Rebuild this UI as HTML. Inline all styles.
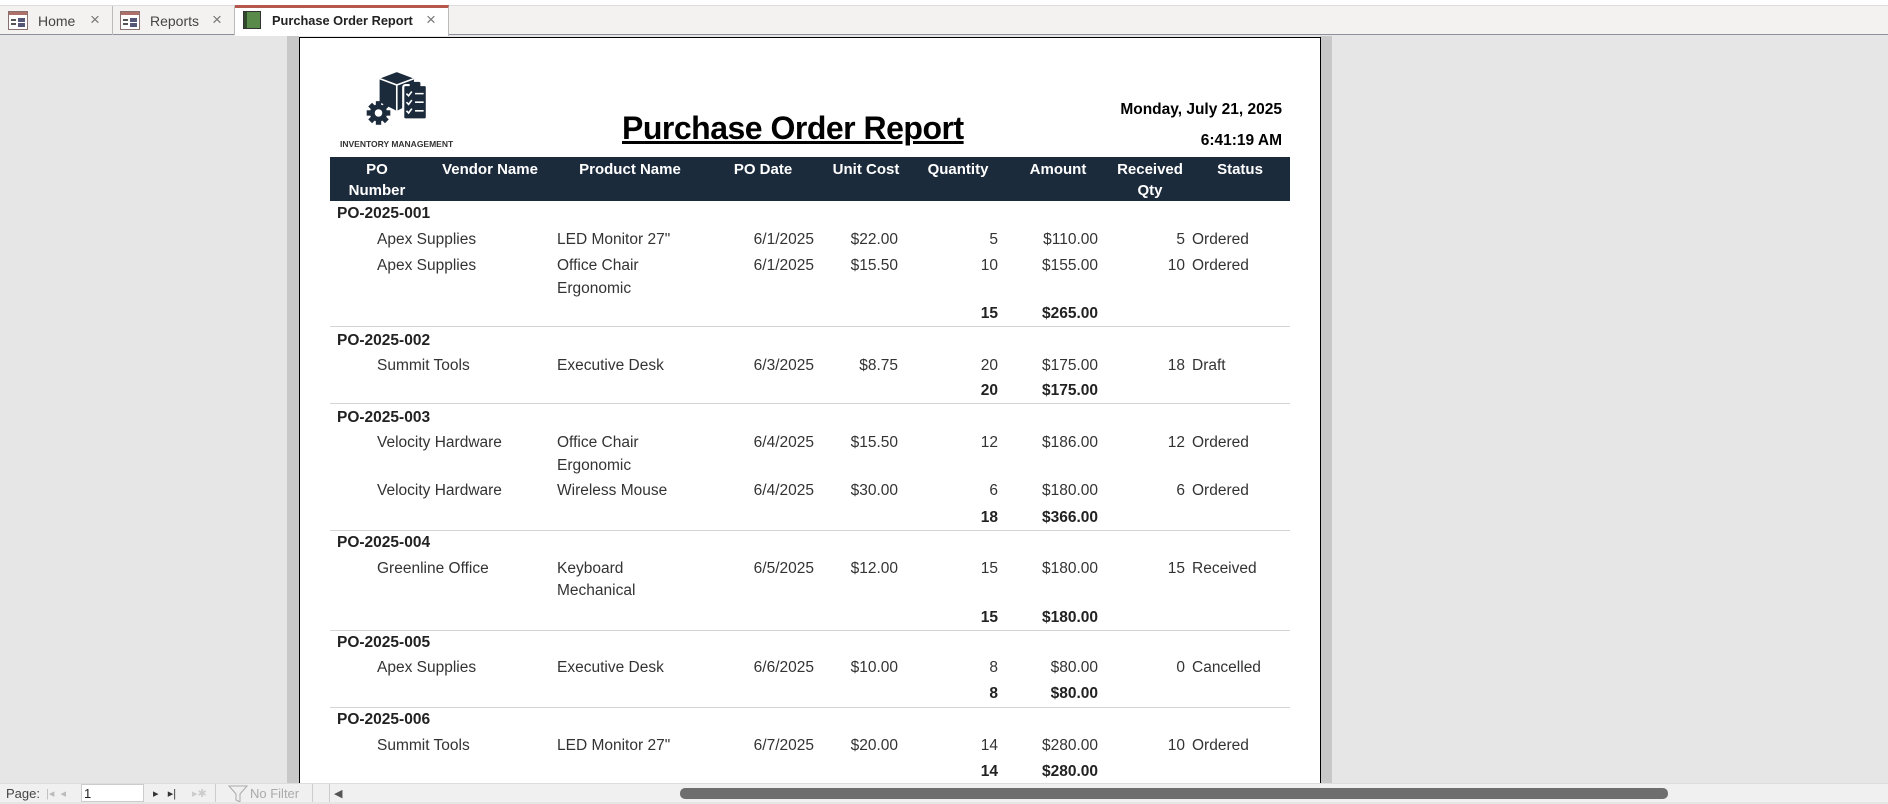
<!DOCTYPE html>
<html><head><meta charset="utf-8"><style>
*{margin:0;padding:0;box-sizing:border-box}
body{width:1888px;height:802px;overflow:hidden;background:#e6e6e6;font-family:"Liberation Sans",sans-serif;position:relative;color:#333}
.a{position:absolute;white-space:nowrap;line-height:20px;font-size:15.5px}
.r{text-align:right}
.b{font-weight:bold;color:#222}
.h{position:absolute;color:#fff;font-weight:bold;font-size:15px;text-align:center;line-height:21px}
.ln{position:absolute;left:330px;width:960px;height:1px;background:#d4d4d4}
</style></head><body>
<div style="position:absolute;left:0;top:0;width:1888px;height:6px;background:#fff;border-bottom:1px solid #ddd"></div>
<div style="position:absolute;left:0;top:6px;width:1888px;height:29px;background:#f3f2f1;border-bottom:1px solid #8a8f99"></div>
<!-- tabs -->
<div style="position:absolute;left:0;top:6px;width:113px;height:29px;border-right:1px solid #bbb"></div>
<div style="position:absolute;left:113px;top:6px;width:122px;height:29px;border-right:1px solid #bbb"></div>
<div style="position:absolute;left:235px;top:5px;width:214px;height:31px;background:#fff;border-top:3px solid #b5574a;border-right:1px solid #bbb"></div>
<svg style="position:absolute;left:8px;top:11px" width="20" height="19"><rect x="0.5" y="0.5" width="19" height="18" fill="#fff" stroke="#8a7070"/><rect x="1" y="1" width="18" height="3" fill="#b0706a"/><rect x="3" y="8" width="5" height="2" fill="#555"/><rect x="10" y="7" width="7" height="4" fill="#557" /><rect x="3" y="12" width="5" height="2" fill="#555"/><rect x="10" y="12" width="7" height="4" fill="#557"/></svg>
<div class="a" style="left:38px;top:11px;font-size:14px;color:#444">Home</div>
<div class="a" style="left:90px;top:10px;font-size:17px;color:#777">×</div>
<svg style="position:absolute;left:120px;top:11px" width="20" height="19"><rect x="0.5" y="0.5" width="19" height="18" fill="#fff" stroke="#8a7070"/><rect x="1" y="1" width="18" height="3" fill="#b0706a"/><rect x="3" y="8" width="5" height="2" fill="#555"/><rect x="10" y="7" width="7" height="4" fill="#557" /><rect x="3" y="12" width="5" height="2" fill="#555"/><rect x="10" y="12" width="7" height="4" fill="#557"/></svg>
<div class="a" style="left:150px;top:11px;font-size:14px;color:#444">Reports</div>
<div class="a" style="left:212px;top:10px;font-size:17px;color:#777">×</div>
<svg style="position:absolute;left:243px;top:11px" width="18" height="18"><rect x="0.5" y="0.5" width="17" height="17" fill="#5a8a4a" stroke="#333"/><rect x="1" y="1" width="3" height="16" fill="#2e4a2a"/></svg>
<div class="a b" style="left:272px;top:11px;font-size:12.8px">Purchase Order Report</div>
<div class="a" style="left:426px;top:10px;font-size:17px;color:#777">×</div>

<!-- page -->
<div style="position:absolute;left:287px;top:36px;width:12px;height:747px;background:#c8c8c8"></div>
<div style="position:absolute;left:1320px;top:36px;width:12px;height:747px;background:#c8c8c8"></div>
<div style="position:absolute;left:299px;top:37px;width:1022px;height:760px;background:#fff;border:1.5px solid #000"></div>

<!-- logo -->
<svg style="position:absolute;left:364px;top:70px" width="72" height="58" viewBox="0 0 66 54">
<g fill="#1c2b3c">
<path d="M14 8 L30 2 L46 8 L46 30 L30 38 L14 30 Z"/>
<path d="M14 8 L30 14 L46 8" stroke="#fff" stroke-width="1.5" fill="none"/>
<path d="M30 14 L30 38" stroke="#fff" stroke-width="1.5"/>
<rect x="36" y="14" width="22" height="32" rx="2" stroke="#fff" stroke-width="2"/>
<rect x="42" y="11" width="10" height="5" rx="1.5"/>
<circle cx="13" cy="40" r="8"/>
<g transform="translate(13 40)"><rect x="-2.5" y="-11" width="5" height="22"/><rect x="-11" y="-2.5" width="22" height="5"/><rect x="-2.5" y="-11" width="5" height="22" transform="rotate(45)"/><rect x="-2.5" y="-11" width="5" height="22" transform="rotate(-45)"/></g>
</g>
<circle cx="13" cy="40" r="3.5" fill="#fff"/>
<g stroke="#fff" stroke-width="1.5" fill="none"><path d="M39 22l2 2 3-4M39 30l2 2 3-4M39 38l2 2 3-4"/><path d="M47 22h8M47 30h8M47 38h8"/></g>
</svg>
<div class="a" style="left:340px;top:134px;font-size:8.5px;font-weight:bold;color:#333;letter-spacing:0">INVENTORY MANAGEMENT</div>
<div class="a" style="left:622px;top:108px;font-size:32px;line-height:40px;font-weight:bold;color:#000;text-decoration:underline;letter-spacing:-0.5px">Purchase Order Report</div>
<div class="a r b" style="right:606px;top:100px;font-size:15.5px;color:#000">Monday, July 21, 2025</div>
<div class="a r b" style="right:606px;top:131px;font-size:15.5px;color:#000">6:41:19 AM</div>

<div style="position:absolute;left:330px;top:157px;width:960px;height:44px;background:#1c2b3c"></div>
<div class="h" style="left:337px;top:159px;width:80px">PO<br>Number</div>
<div class="h" style="left:430px;top:159px;width:120px">Vendor Name</div>
<div class="h" style="left:560px;top:159px;width:140px">Product Name</div>
<div class="h" style="left:713px;top:159px;width:100px">PO Date</div>
<div class="h" style="left:816px;top:159px;width:100px">Unit Cost</div>
<div class="h" style="left:908px;top:159px;width:100px">Quantity</div>
<div class="h" style="left:1008px;top:159px;width:100px">Amount</div>
<div class="h" style="left:1110px;top:159px;width:80px">Received<br>Qty</div>
<div class="h" style="left:1200px;top:159px;width:80px">Status</div>

<!-- group 1 -->
<div class="a b" style="left:337px;top:204px">PO-2025-001</div>
<div class="a" style="left:377px;top:230px">Apex Supplies</div><div class="a" style="left:557px;top:230px">LED Monitor 27"</div><div class="a r" style="right:1074px;top:230px">6/1/2025</div><div class="a r" style="right:990px;top:230px">$22.00</div><div class="a r" style="right:890px;top:230px">5</div><div class="a r" style="right:790px;top:230px">$110.00</div><div class="a r" style="right:703px;top:230px">5</div><div class="a" style="left:1192px;top:230px">Ordered</div>
<div class="a" style="left:377px;top:256px">Apex Supplies</div><div class="a" style="left:557px;top:256px">Office Chair</div><div class="a" style="left:557px;top:279px">Ergonomic</div><div class="a r" style="right:1074px;top:256px">6/1/2025</div><div class="a r" style="right:990px;top:256px">$15.50</div><div class="a r" style="right:890px;top:256px">10</div><div class="a r" style="right:790px;top:256px">$155.00</div><div class="a r" style="right:703px;top:256px">10</div><div class="a" style="left:1192px;top:256px">Ordered</div>
<div class="a r b" style="right:890px;top:304px">15</div><div class="a r b" style="right:790px;top:304px">$265.00</div>
<div class="ln" style="top:326px"></div>
<!-- group 2 -->
<div class="a b" style="left:337px;top:331px">PO-2025-002</div>
<div class="a" style="left:377px;top:356px">Summit Tools</div><div class="a" style="left:557px;top:356px">Executive Desk</div><div class="a r" style="right:1074px;top:356px">6/3/2025</div><div class="a r" style="right:990px;top:356px">$8.75</div><div class="a r" style="right:890px;top:356px">20</div><div class="a r" style="right:790px;top:356px">$175.00</div><div class="a r" style="right:703px;top:356px">18</div><div class="a" style="left:1192px;top:356px">Draft</div>
<div class="a r b" style="right:890px;top:381px">20</div><div class="a r b" style="right:790px;top:381px">$175.00</div>
<div class="ln" style="top:403px"></div>
<!-- group 3 -->
<div class="a b" style="left:337px;top:408px">PO-2025-003</div>
<div class="a" style="left:377px;top:433px">Velocity Hardware</div><div class="a" style="left:557px;top:433px">Office Chair</div><div class="a" style="left:557px;top:456px">Ergonomic</div><div class="a r" style="right:1074px;top:433px">6/4/2025</div><div class="a r" style="right:990px;top:433px">$15.50</div><div class="a r" style="right:890px;top:433px">12</div><div class="a r" style="right:790px;top:433px">$186.00</div><div class="a r" style="right:703px;top:433px">12</div><div class="a" style="left:1192px;top:433px">Ordered</div>
<div class="a" style="left:377px;top:481px">Velocity Hardware</div><div class="a" style="left:557px;top:481px">Wireless Mouse</div><div class="a r" style="right:1074px;top:481px">6/4/2025</div><div class="a r" style="right:990px;top:481px">$30.00</div><div class="a r" style="right:890px;top:481px">6</div><div class="a r" style="right:790px;top:481px">$180.00</div><div class="a r" style="right:703px;top:481px">6</div><div class="a" style="left:1192px;top:481px">Ordered</div>
<div class="a r b" style="right:890px;top:508px">18</div><div class="a r b" style="right:790px;top:508px">$366.00</div>
<div class="ln" style="top:530px"></div>
<!-- group 4 -->
<div class="a b" style="left:337px;top:533px">PO-2025-004</div>
<div class="a" style="left:377px;top:559px">Greenline Office</div><div class="a" style="left:557px;top:559px">Keyboard</div><div class="a" style="left:557px;top:581px">Mechanical</div><div class="a r" style="right:1074px;top:559px">6/5/2025</div><div class="a r" style="right:990px;top:559px">$12.00</div><div class="a r" style="right:890px;top:559px">15</div><div class="a r" style="right:790px;top:559px">$180.00</div><div class="a r" style="right:703px;top:559px">15</div><div class="a" style="left:1192px;top:559px">Received</div>
<div class="a r b" style="right:890px;top:608px">15</div><div class="a r b" style="right:790px;top:608px">$180.00</div>
<div class="ln" style="top:630px"></div>
<!-- group 5 -->
<div class="a b" style="left:337px;top:633px">PO-2025-005</div>
<div class="a" style="left:377px;top:658px">Apex Supplies</div><div class="a" style="left:557px;top:658px">Executive Desk</div><div class="a r" style="right:1074px;top:658px">6/6/2025</div><div class="a r" style="right:990px;top:658px">$10.00</div><div class="a r" style="right:890px;top:658px">8</div><div class="a r" style="right:790px;top:658px">$80.00</div><div class="a r" style="right:703px;top:658px">0</div><div class="a" style="left:1192px;top:658px">Cancelled</div>
<div class="a r b" style="right:890px;top:684px">8</div><div class="a r b" style="right:790px;top:684px">$80.00</div>
<div class="ln" style="top:707px"></div>
<!-- group 6 -->
<div class="a b" style="left:337px;top:710px">PO-2025-006</div>
<div class="a" style="left:377px;top:736px">Summit Tools</div><div class="a" style="left:557px;top:736px">LED Monitor 27"</div><div class="a r" style="right:1074px;top:736px">6/7/2025</div><div class="a r" style="right:990px;top:736px">$20.00</div><div class="a r" style="right:890px;top:736px">14</div><div class="a r" style="right:790px;top:736px">$280.00</div><div class="a r" style="right:703px;top:736px">10</div><div class="a" style="left:1192px;top:736px">Ordered</div>
<div class="a r b" style="right:890px;top:762px">14</div><div class="a r b" style="right:790px;top:762px">$280.00</div>

<!-- bottom bar -->
<div style="position:absolute;left:0;top:783px;width:1888px;height:19px;background:#f0f0f0;border-top:1px solid #ddd"></div>
<div class="a" style="left:6px;top:785px;font-size:13px;line-height:18px;color:#444">Page:</div>
<div class="a" style="left:46px;top:784px;font-size:11px;color:#bbb">|◂ &nbsp;◂</div>
<div style="position:absolute;left:81px;top:784px;width:63px;height:18px;background:#fff;border:1px solid #ccc"></div>
<div class="a" style="left:84px;top:785px;font-size:13px;line-height:18px;color:#222">1</div>
<div class="a" style="left:153px;top:784px;font-size:11px;color:#333">▸ &nbsp; ▸|</div>
<div class="a" style="left:192px;top:784px;font-size:11px;color:#ccc">▸✱</div>
<div style="position:absolute;left:215px;top:784px;width:98px;height:18px;border-left:1px solid #ccc;border-right:1px solid #ccc"></div>
<svg style="position:absolute;left:228px;top:785px" width="20" height="17"><path d="M1 1h18l-7 8v8l-4-2v-6z" fill="none" stroke="#aaa"/></svg>
<div class="a" style="left:250px;top:785px;font-size:13px;line-height:18px;color:#aaa">No Filter</div>
<div style="position:absolute;left:329px;top:784px;width:1px;height:18px;background:#ccc"></div>
<div class="a" style="left:334px;top:784px;font-size:11px;color:#555">◀</div>
<div style="position:absolute;left:680px;top:788px;width:988px;height:11px;background:#6e6e6e;border-radius:5px"></div>
</body></html>
